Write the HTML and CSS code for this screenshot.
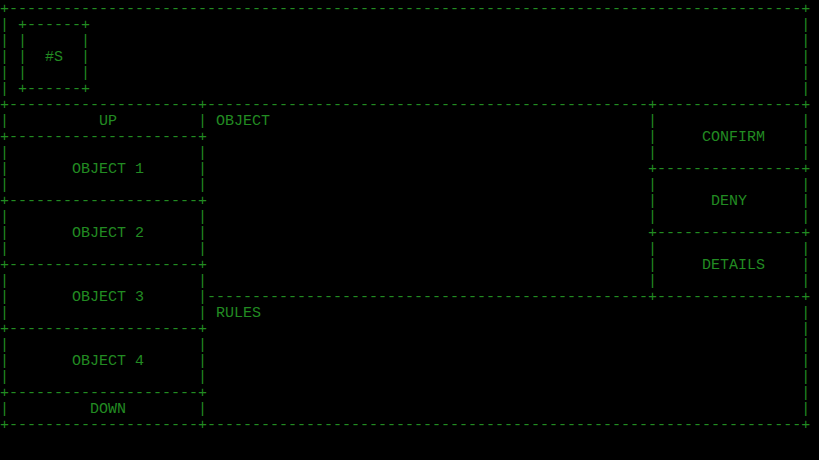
FILE: index.html
```html
<!DOCTYPE html>
<html lang="en">
<head>
<meta charset="utf-8">
<title>Terminal UI</title>
<link rel="stylesheet" href="styles.css">
</head>
<body>
<pre class="screen">+----------------------------------------------------------------------------------------+
| +------+                                                                               |
| |      |                                                                               |
| |  #S  |                                                                               |
| |      |                                                                               |
| +------+                                                                               |
+---------------------+-------------------------------------------------+----------------+
|          UP         | OBJECT                                          |                |
+---------------------+                                                 |     CONFIRM    |
|                     |                                                 |                |
|       OBJECT 1      |                                                 +----------------+
|                     |                                                 |                |
+---------------------+                                                 |      DENY      |
|                     |                                                 |                |
|       OBJECT 2      |                                                 +----------------+
|                     |                                                 |                |
+---------------------+                                                 |     DETAILS    |
|                     |                                                 |                |
|       OBJECT 3      |-------------------------------------------------+----------------+
|                     | RULES                                                            |
+---------------------+                                                                  |
|                     |                                                                  |
|       OBJECT 4      |                                                                  |
|                     |                                                                  |
+---------------------+                                                                  |
|         DOWN        |                                                                  |
+---------------------+------------------------------------------------------------------+</pre>
</body>
</html>
```

FILE: styles.css
```css
html, body {
  margin: 0;
  padding: 0;
  background: #000;
}

.screen {
  margin: 0;
  padding-top: 2px;
  font-family: "Liberation Mono", "DejaVu Sans Mono", monospace;
  font-size: 15px;
  line-height: 16px;
  color: #228b22;
  white-space: pre;
}
```
